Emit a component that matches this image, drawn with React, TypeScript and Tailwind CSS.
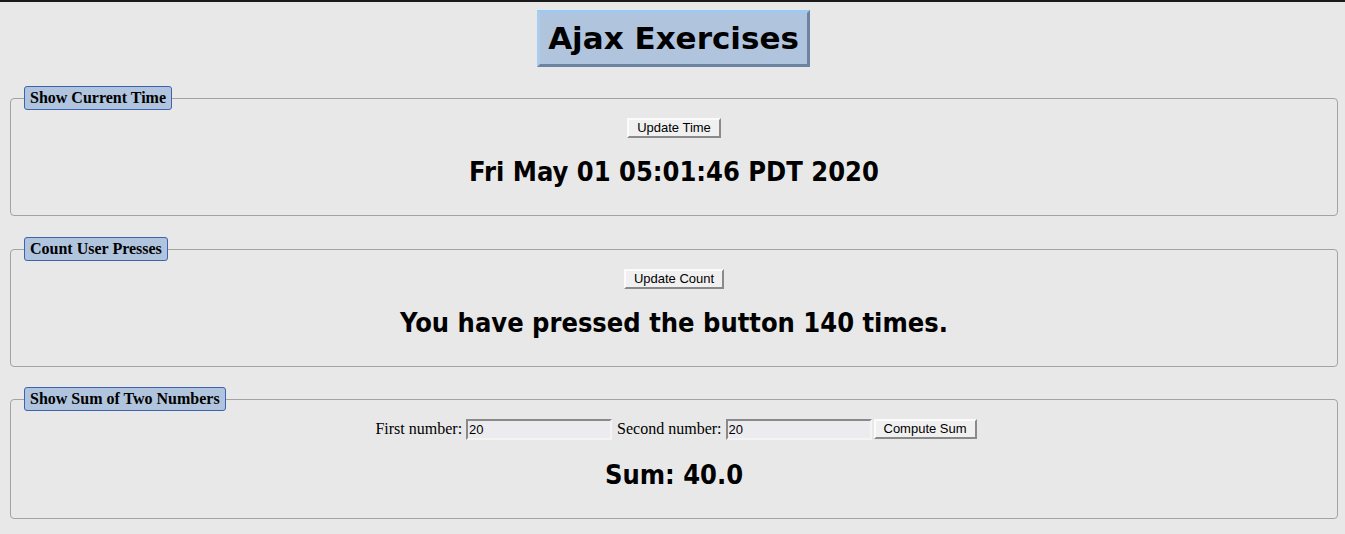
export default function App() {
  const serif = "font-['Liberation_Serif',serif]";
  const verdana = "font-['DejaVu_Sans',Verdana,sans-serif]";
  const bigText =
    "font-['DejaVu_Sans_Condensed','DejaVu_Sans',sans-serif] text-center font-bold text-[27px] leading-[31px] mt-[18px]";
  const btn =
    "font-['Liberation_Sans',sans-serif] text-[13px] leading-[14px] text-black bg-[#f0f0f0] border-2 border-t-[#fbfbfb] border-l-[#fbfbfb] border-b-[#8a8a8a] border-r-[#8a8a8a] px-[8px] py-[1px]";
  const input =
    "font-['Liberation_Sans',sans-serif] text-[13px] w-[146px] h-[21px] bg-[#ebebf0] border-2 border-t-[#8a8a8a] border-l-[#8a8a8a] border-b-[#f4f4f4] border-r-[#f4f4f4] px-[1px] text-black";
  const legend =
    `${serif} ml-[13px] px-[5px] h-[24px] leading-[22px] text-[16px] font-bold bg-[#b0c4de] border border-[#3d63b0] rounded-[3px] text-black`;

  return (
    <div className="min-h-[534px] w-full bg-[#e8e8e8] text-black">
      <div className="h-[2px] bg-[#1a1a1a]" />
      <div className="flex justify-center pt-[8px]">
        <h1
          className={`${verdana} font-bold text-[31px] leading-[51px] px-[8px] ml-[2px] bg-[#b0c4de] border-[3px] border-t-[#9dcaf2] border-l-[#a9cdef] border-b-[#6c84a2] border-r-[#6c84a2]`}
        >
          Ajax Exercises
        </h1>
      </div>

      <fieldset className="ml-[10px] mr-[7px] mt-[19px] h-[130px] border border-[#a3a3a3] rounded-[4px]">
        <legend className={legend}>Show Current Time</legend>
        <div className="flex justify-center pt-[8px]">
          <button className={btn}>Update Time</button>
        </div>
        <div className={bigText}>Fri May 01 05:01:46 PDT 2020</div>
      </fieldset>

      <fieldset className="ml-[10px] mr-[7px] mt-[21px] h-[130px] border border-[#a3a3a3] rounded-[4px]">
        <legend className={legend}>Count User Presses</legend>
        <div className="flex justify-center pt-[8px]">
          <button className={btn}>Update Count</button>
        </div>
        <div className={bigText}>You have pressed the button 140 times.</div>
      </fieldset>

      <fieldset className="ml-[10px] mr-[7px] mt-[20px] h-[132px] border border-[#a3a3a3] rounded-[4px]">
        <legend className={legend}>Show Sum of Two Numbers</legend>
        <div className={`${serif} flex justify-center items-center pt-[6px] pl-[4px] text-[16px]`}>
          <span className="mr-[4px]">First number:</span>
          <input className={input} defaultValue="20" />
          <span className="ml-[5px] mr-[4px]">Second number:</span>
          <input className={input} defaultValue="20" />
          <button className={`${btn} ml-[2px]`}>Compute Sum</button>
        </div>
        <div className={bigText}>Sum: 40.0</div>
      </fieldset>
    </div>
  );
}
